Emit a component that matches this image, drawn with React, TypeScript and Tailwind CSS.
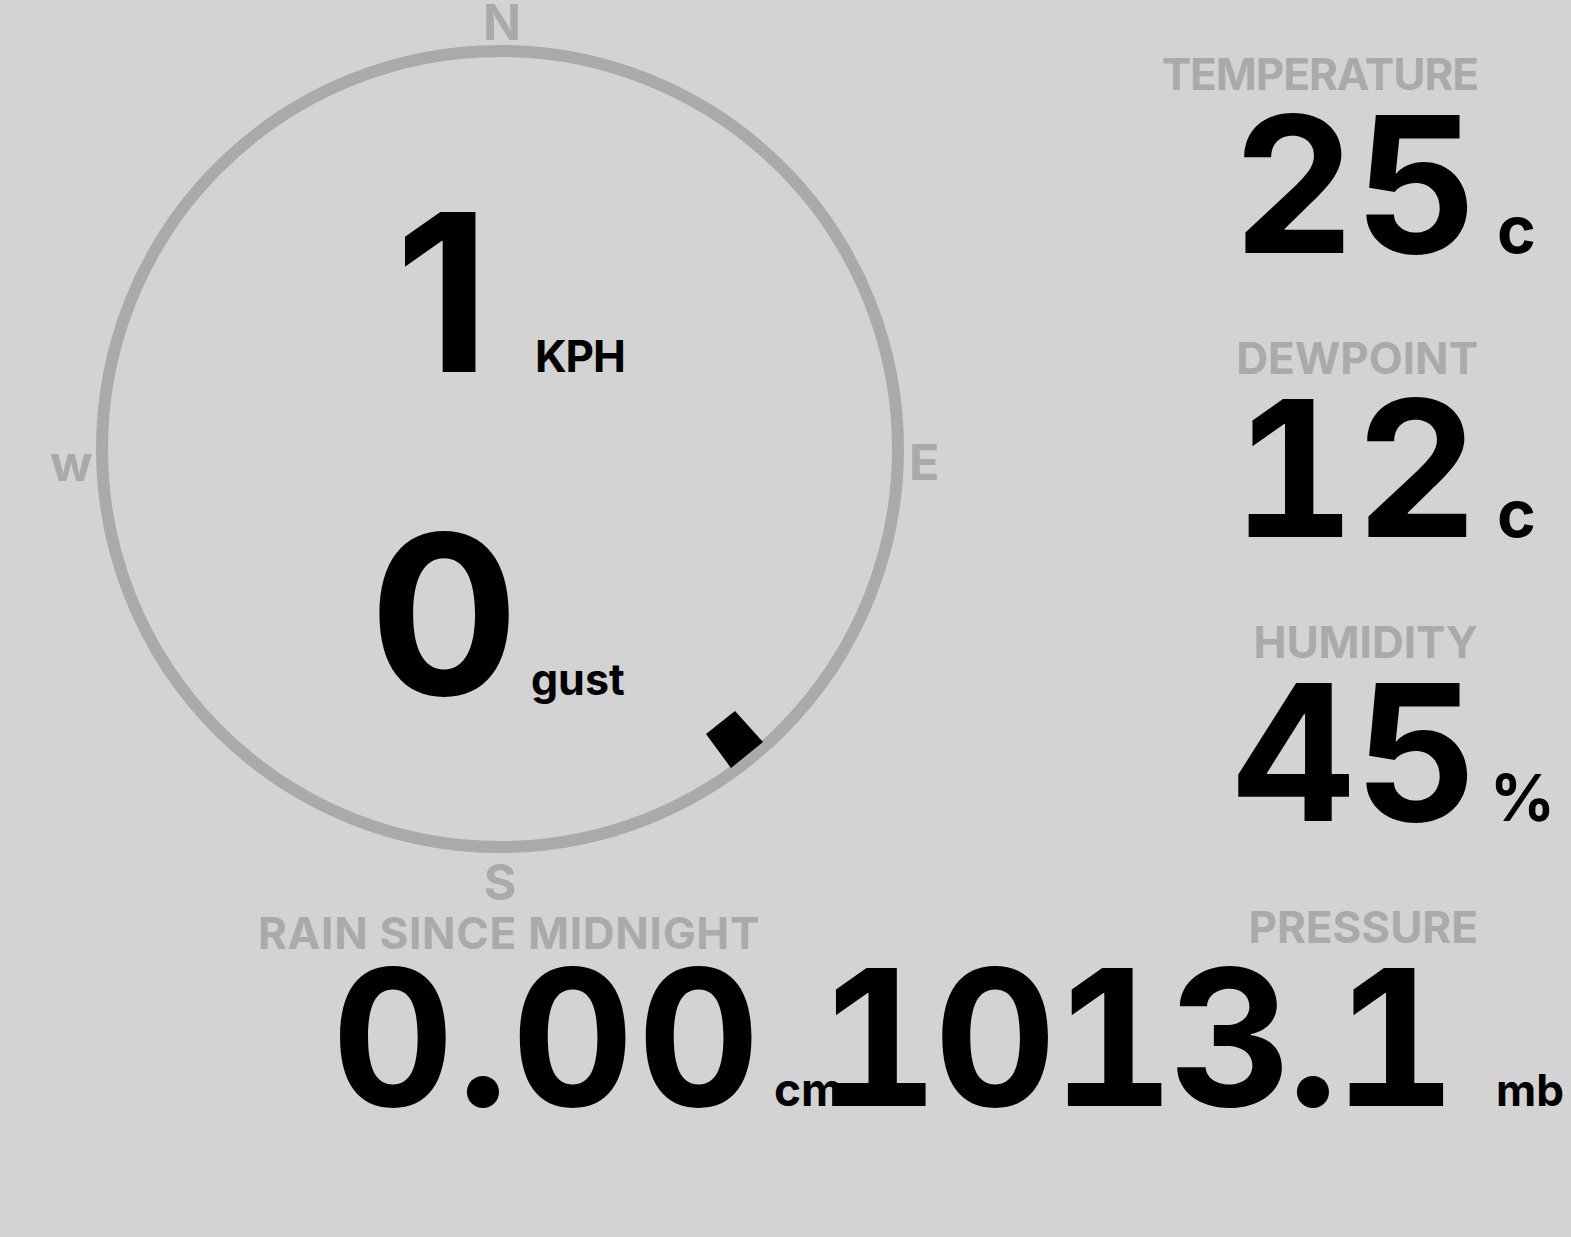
import React from 'react';

const Stat = ({
  label,
  value,
  unit,
  labelClass = '',
  unitClass = 'pl-[19px] text-[66px]',
}: {
  label: string;
  value: string;
  unit: string;
  labelClass?: string;
  unitClass?: string;
}) => (
  <div className="grid grid-cols-[1fr_93px] content-start items-baseline h-[284px]">
    <div className={`text-right text-[44px] leading-[44px] text-[#aaaaaa] ${labelClass}`}>{label}</div>
    <div />
    <div className="text-right text-[190px] leading-[176px] tabular-nums">{value}</div>
    <div className={`leading-none ${unitClass}`}>{unit}</div>
  </div>
);

const Compass = () => {
  const ticks = [0, 45, 90, 135, 180, 225, 270, 315];
  return (
    <div className="relative w-[1000px] h-[905px] shrink-0">
      <svg className="absolute inset-0" width="1000" height="905" viewBox="0 0 1000 905">
        <circle cx="500" cy="449" r="398" fill="none" stroke="#aaaaaa" strokeWidth="12" />
        {ticks.map((a) => {
          const r = (a * Math.PI) / 180;
          const x1 = 500 + Math.sin(r) * 393;
          const y1 = 449 - Math.cos(r) * 393;
          const x2 = 500 + Math.sin(r) * 403;
          const y2 = 449 - Math.cos(r) * 403;
          return <line key={a} x1={x1} y1={y1} x2={x2} y2={y2} stroke="#aaaaaa" strokeWidth="5" />;
        })}
        <polygon points="735,711 763,742 731,768 706,734" fill="#000" />
      </svg>

      {/* cardinal points */}
      <div className="absolute left-[472px] top-[2px] w-[60px] text-center text-[50px] leading-[40px] text-[#aaaaaa]">N</div>
      <div className="absolute left-[909px] top-[442px] text-[50px] leading-[40px] text-[#aaaaaa]">E</div>
      <div className="absolute left-[470px] top-[862px] w-[60px] text-center text-[50px] leading-[40px] text-[#aaaaaa]">S</div>
      <div className="absolute left-[50px] top-[443px] text-[50px] leading-[40px] text-[#aaaaaa]">w</div>

      {/* wind speed + gust */}
      <div className="relative flex flex-col items-center pt-[212px] gap-[157px]">
        <div className="flex items-baseline gap-[45px] pl-[20px]">
          <span className="text-[220px] leading-[160px]">1</span>
          <span className="text-[44px] leading-none tracking-[-1px]">KPH</span>
        </div>
        <div className="flex items-baseline gap-[12px] pr-[6px]">
          <span className="text-[222px] leading-[160px]">0</span>
          <span className="text-[43px] leading-none">gust</span>
        </div>
      </div>
    </div>
  );
};

export default function App() {
  return (
    <div className="min-h-screen w-full bg-[#d3d3d3] font-[Inter,sans-serif] font-bold text-black overflow-hidden">
      <div className="flex h-[905px]">
        <Compass />
        <div className="flex-1 pt-[52px]">
          <Stat label="TEMPERATURE" value="25" unit="c" labelClass="tracking-[-1px]" />
          <Stat label="DEWPOINT" value="12" unit="c" />
          <Stat label="HUMIDITY" value="45" unit="%" unitClass="pl-[12px] text-[64px]" />
        </div>
      </div>

      <div className="flex justify-end">
        {/* rain since midnight */}
        <div className="grid grid-cols-[auto_80px] content-start items-baseline">
          <div className="pt-[12px] text-right text-[44px] leading-[32px] tracking-[0.7px] text-[#aaaaaa]">RAIN SINCE MIDNIGHT</div>
          <div />
          <div className="mr-[-3px] text-right text-[190px] leading-[176px] tabular-nums tracking-[3px]">0.00</div>
          <div className="pl-[14px] text-[46px] leading-none">cm</div>
        </div>
        {/* pressure */}
        <div className="grid grid-cols-[638px_93px] content-start items-baseline">
          <div className="text-right text-[44px] leading-[44px] text-[#aaaaaa]">PRESSURE</div>
          <div />
          <div className="flex justify-end whitespace-nowrap pr-[27px] text-[190px] leading-[176px] tabular-nums tracking-[-5px]">1013.1</div>
          <div className="pl-[18px] text-[44px] leading-none">mb</div>
        </div>
      </div>
    </div>
  );
}
